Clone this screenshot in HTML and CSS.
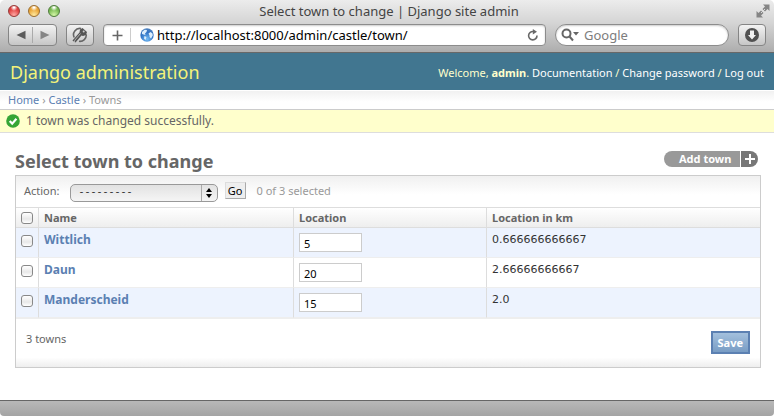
FILE: index.html
```html
<!DOCTYPE html>
<html lang="en">
<head>
<meta charset="utf-8">
<title>Select town to change | Django site admin</title>
<link rel="stylesheet" href="styles.css">
</head>
<body>
<div class="window">
  <div class="chrome">
    <div class="titlebar">
      <div class="lights">
        <button type="button" class="light light-red" aria-label="Close"></button>
        <button type="button" class="light light-amber" aria-label="Minimize"></button>
        <button type="button" class="light light-green" aria-label="Zoom"></button>
      </div>
      <div class="window-title">Select town to change | Django site admin</div>
      <button type="button" class="fullscreen" aria-label="Full screen">
        <svg width="14" height="14" viewBox="0 0 14 14"><path d="M7 .5h6.500V7l-2-2-2.500 2.500L6.500 5 9 2.500zM.5 7l2 2L5 6.500 7.500 9 5 11.500l2 2H.5z" fill="#858585"/><path d="M5 5l4 4" stroke="#dcdcdc" stroke-width="1" transform="rotate(90 7 7)"/></svg>
      </button>
    </div>
    <div class="toolbar">
      <div class="nav">
        <button type="button" aria-label="Back"><svg width="10" height="10" viewBox="0 0 10 10"><path d="M9.500 .8v8.400L.5 5z" fill="#5b5b5b"/></svg></button>
        <button type="button" aria-label="Forward"><svg width="10" height="10" viewBox="0 0 10 10"><path d="M.5 .8v8.400L9.500 5z" fill="#858585"/></svg></button>
      </div>
      <button type="button" class="tool" aria-label="Password manager">
        <svg width="18" height="18" viewBox="0 0 18 18"><path d="M3.200 11.500A6.300 6.300 0 0 1 10 2.500M8 15.300a6.300 6.300 0 0 0 7.200-7" fill="none" stroke="#666" stroke-width="1.600"/><path d="M1.500 14.500L8.500 6.500l.5-3 2.500-1.500 4.500 4-1 3-3 1-1.500-.5L4.500 16.500l-1-.5 1-2-2 1.500z" fill="#555"/><path d="M3.500 14.500l6-7" stroke="#c8c8c8" stroke-width=".8"/><circle cx="12.700" cy="5.500" r="1" fill="#ccc"/></svg>
      </button>
      <div class="address">
        <button type="button" class="plus" aria-label="Add bookmark"><svg width="11" height="11" viewBox="0 0 11 11"><path d="M5.500 0.500v10M0.500 5.500h10" stroke="#666" stroke-width="1.600"/></svg></button>
        <svg class="globe" width="14" height="14" viewBox="0 0 14 14"><defs><radialGradient id="sea" cx=".5" cy=".8" r=".8"><stop offset="0" stop-color="#76bdf5"/><stop offset=".6" stop-color="#2f72c4"/><stop offset="1" stop-color="#4d80bc"/></radialGradient></defs><circle cx="7" cy="7" r="6.700" fill="url(#sea)"/><path d="M2 4L4.500 1.800l2.500.2-.5 2L5 5.500l.5 1.500-2-.5L2 6zM8.500 5.500l2-1.500 2 1.500.3 2-1.800 3-1.500-1.500v-1.500zM4.500 8l2 1-1 3-1.500-1.500z" fill="#dceefc"/></svg>
        <input type="text" aria-label="Address" value="http://localhost:8000/admin/castle/town/">
        <button type="button" aria-label="Reload"><svg width="12" height="12" viewBox="0 0 12 12"><path d="M10 6.500A4.200 4.200 0 1 1 6.500 2.500" fill="none" stroke="#686868" stroke-width="1.600"/><path d="M5.800 0l4.200 2.700-4.200 2.800z" fill="#686868"/></svg></button>
      </div>
      <div class="search">
        <svg width="18" height="14" viewBox="0 0 18 14"><circle cx="5.500" cy="5.500" r="4" fill="none" stroke="#666" stroke-width="2"/><path d="M8.500 8.500l3.500 4" stroke="#666" stroke-width="2"/><path d="M12 4h6l-3 3.500z" fill="#666"/></svg>
        <input type="text" aria-label="Search" placeholder="Google">
      </div>
      <button type="button" class="tool" aria-label="Downloads"><svg width="16" height="16" viewBox="0 0 16 16"><circle cx="8" cy="8" r="7" fill="#505050"/><path d="M6 3.500h4V8h2l-4 4.500L4 8h2z" fill="#f2f2f2"/></svg></button>
    </div>
  </div>

  <header class="site-header">
    <div class="branding">Django administration</div>
    <div class="user-tools">Welcome, <strong>admin</strong>. <a href="#">Documentation</a> / <a href="#">Change password</a> / <a href="#">Log out</a></div>
  </header>
  <nav class="breadcrumbs"><a href="#">Home</a> › <a href="#">Castle</a> › Towns</nav>
  <div class="message">
    <svg width="14" height="14" viewBox="0 0 14 14"><circle cx="7" cy="7" r="6.800" fill="#36a536"/><path d="M3.700 7l2.500 2.600 4.200-4.800" fill="none" stroke="#fff" stroke-width="2.200"/></svg>
    <span>1 town was changed successfully.</span>
  </div>

  <main>
    <div class="heading">
      <h1>Select town to change</h1>
      <a class="add" href="#"><span class="add-text">Add town</span><span class="add-icon"><svg width="10" height="10" viewBox="0 0 10 10"><path d="M5 0v10M0 5h10" stroke="#fff" stroke-width="2"/></svg></span></a>
    </div>
    <form class="changelist">
      <div class="actions">
        <label for="action">Action:</label>
        <div class="select">
          <select id="action"><option>---------</option></select>
          <svg class="arrows" width="6" height="10" viewBox="0 0 6 10"><path d="M0 4l3-4 3 4zM0 6l3 4 3-4z" fill="#000"/></svg>
        </div>
        <button type="button" class="go">Go</button>
        <span class="count">0 of 3 selected</span>
      </div>
      <table>
        <colgroup><col class="col-check"><col class="col-name"><col class="col-location"><col></colgroup>
        <thead>
          <tr><th class="check"><input type="checkbox" aria-label="Select all"></th><th>Name</th><th>Location</th><th>Location in km</th></tr>
        </thead>
        <tbody>
          <tr><td class="check"><input type="checkbox" aria-label="Select Wittlich"></td><th><a href="#">Wittlich</a></th><td class="field"><input type="text" aria-label="Wittlich location" value="5"></td><td>0.666666666667</td></tr>
          <tr><td class="check"><input type="checkbox" aria-label="Select Daun"></td><th><a href="#">Daun</a></th><td class="field"><input type="text" aria-label="Daun location" value="20"></td><td>2.66666666667</td></tr>
          <tr><td class="check"><input type="checkbox" aria-label="Select Manderscheid"></td><th><a href="#">Manderscheid</a></th><td class="field"><input type="text" aria-label="Manderscheid location" value="15"></td><td>2.0</td></tr>
        </tbody>
      </table>
      <div class="paginator"><span>3 towns</span><button type="button" class="save">Save</button></div>
    </form>
  </main>
  <div class="statusbar"></div>
</div>
</body>
</html>
```
FILE: styles.css
```css
* { box-sizing: border-box; }
body {
  margin: 0;
  background: #fff;
  color: #333;
  font: 12px/16px "Noto Sans", "Open Sans", sans-serif;
}
button, input, select { margin: 0; font: inherit; }
a { color: #5b80b2; text-decoration: none; }
svg { display: block; flex: none; }

.window { display: flex; flex-direction: column; min-height: 100vh; }

.chrome {
  height: 53px;
  background: linear-gradient(#ececec, #d4d4d4 45%, #adadad);
  border-bottom: 1px solid #686868;
  border-radius: 5px 5px 0 0;
}
.chrome button { display: flex; align-items: center; justify-content: center; padding: 0; border: 0; background: none; }
.titlebar {
  display: grid;
  grid-template-columns: 1fr auto 1fr;
  align-items: center;
  height: 24px;
  padding: 0 4px 2px 8px;
}
.lights { display: flex; gap: 8px; }
.chrome .light { width: 12px; height: 12px; border: 1px solid #777; border-radius: 50%; }
.chrome .light-red { background: radial-gradient(circle at 50% 15%, #fff 5%, transparent 35%), radial-gradient(circle at 50% 90%, #ffaaa5, #e0403f 60%); border-color: #963a38; }
.chrome .light-amber { background: radial-gradient(circle at 50% 15%, #fff 5%, transparent 35%), radial-gradient(circle at 50% 90%, #ffeaa0, #eaa435 60%); border-color: #9a6d30; }
.chrome .light-green { background: radial-gradient(circle at 50% 15%, #fff 5%, transparent 35%), radial-gradient(circle at 50% 90%, #d5f7a8, #77b950 60%); border-color: #4e7b3c; }
.window-title { color: #444; font-size: 13px; }
.fullscreen { justify-self: end; }

.toolbar { display: flex; gap: 9px; height: 22px; padding: 0 8px; }
.nav, .chrome .tool {
  border: 1px solid #858585;
  border-radius: 4px;
  background: linear-gradient(#f3f3f3, #c6c6c6);
}
.nav { display: flex; width: 49px; padding: 2px 0; }
.nav button { flex: 1; }
.nav button + button { border-left: 1px solid #aaa; }
.chrome .tool { width: 28px; }
.address, .search {
  display: flex;
  align-items: center;
  border: 1px solid #8c8c8c;
  background: #fff;
  box-shadow: inset 0 1px 2px #ccc;
}
.address { flex: 1; padding: 0 6px 0 0; border-radius: 4px; }
.chrome .plus { width: 27px; height: 14px; border-right: 1px solid #ccc; }
.globe { margin-left: 9px; }
.address input, .search input { flex: 1; min-width: 0; padding: 0 3px; border: 0; outline: 0; background: none; font-size: 13px; color: #000; }
.search { width: 174px; padding-left: 5px; border-radius: 11px; }
.search input { padding-left: 5px; }
.search input::placeholder { color: #7d7d7d; }

.site-header {
  display: flex;
  align-items: center;
  justify-content: space-between;
  height: 37px;
  padding: 0 10px;
  background: #417690;
  color: #ffc;
}
.branding { color: #f4f379; font-size: 18px; line-height: 24px; }
.user-tools { padding-top: 3px; font-size: 11px; }
.user-tools a { color: #fff; }

.breadcrumbs {
  height: 20px;
  padding: 1px 8px;
  border-top: 1px solid #fff;
  border-bottom: 1px solid #ccc;
  background: linear-gradient(#f1f1f1, #fff 60%);
  color: #999;
  font-size: 11px;
}
.message {
  display: flex;
  align-items: center;
  gap: 6px;
  height: 23px;
  padding: 0 6px;
  border-bottom: 1px solid #ddd;
  background: #ffc;
  color: #666;
}

main { flex: 1; padding: 18px 13px 32px 15px; }
.heading { display: flex; justify-content: space-between; height: 24px; }
h1 { margin: 0; color: #666; font-size: 18px; line-height: 20px; }
.add { display: flex; width: 94px; height: 16px; gap: 1px; margin-right: 3px; color: #fff; font-size: 11px; font-weight: bold; }
.add-text { flex: 1; padding-left: 15px; border-radius: 8px 0 0 8px; background: #999; }
.add-icon { display: flex; align-items: center; justify-content: center; width: 17px; border-radius: 0 8px 8px 0; background: #777; }

.changelist { border: 1px solid #ccc; }
.actions {
  display: flex;
  align-items: center;
  height: 32px;
  padding: 0 8px 2px;
  border-bottom: 1px solid #ddd;
  background: linear-gradient(#f0f0f0, #fff 60%);
  color: #666;
  font-size: 11px;
}
.select { position: relative; width: 148px; height: 18px; margin: 4px 7px 0 10px; }
.select select {
  appearance: none;
  display: block;
  width: 100%;
  height: 100%;
  padding: 0 8px;
  border: 1px solid #999;
  border-radius: 5px;
  background: linear-gradient(90deg, transparent 130px, #aaa 130px, #aaa 131px, transparent 131px), linear-gradient(#e2e2e2, #f5f5f5);
  color: #333;
  font: 10px/16px "Liberation Mono", monospace;
}
.arrows { position: absolute; top: 4px; right: 6px; pointer-events: none; }
.go { width: 21px; height: 17px; padding: 0; border: 1px solid; border-color: #ddd #aaa #aaa #ddd; background: #eee; color: #000; line-height: 14px; }
.count { margin-left: 11px; color: #999; }

table { width: 100%; table-layout: fixed; border-collapse: separate; border-spacing: 0; font-size: 11px; }
.col-check { width: 23px; }
.col-name { width: 255px; }
.col-location { width: 193px; }
th, td { padding: 4px 5px; border-right: 1px solid #ddd; border-bottom: 1px solid #eee; text-align: left; vertical-align: top; }
th:last-child, td:last-child { border-right: 0; }
thead th { height: 20px; padding-top: 2px; padding-bottom: 1px; border-bottom-color: #ddd; background: linear-gradient(#fff, #eee); color: #666; }
tbody td, tbody th { height: 30px; }
tbody td { font-family: "DejaVu Sans", sans-serif; }
tbody th { font-size: 12px; }
tbody tr:nth-child(odd) { background: #edf3fe; }
.check { padding-right: 0; }
[type="checkbox"] { appearance: none; display: block; width: 12px; height: 12px; margin-top: 3px; border: 1px solid #888; border-radius: 3px; background: linear-gradient(#fff, #e8e8e8 60%, #fff); }
thead [type="checkbox"] { margin-top: 2px; }
[type="checkbox"]:checked { background: #5b80b2; }
.field input { display: block; width: 63px; height: 19px; margin-top: 1px; padding: 2px 4px 0; border: 1px solid #ccc; background: #fff; color: #000; font-family: "Noto Sans", sans-serif; }

.paginator {
  display: flex;
  align-items: flex-start;
  justify-content: space-between;
  height: 49px;
  padding: 12px 10px 0;
  border-top: 1px solid #eee;
  background: linear-gradient(#fff 80%, #eee);
  color: #666;
  font-size: 11px;
}
.save { height: 23px; padding: 0 5px; border: 2px solid #5b80b2; background: linear-gradient(#a3c0dd, #789cc4); color: #fff; font-weight: bold; }

.statusbar { height: 16px; border-top: 1px solid #666; border-radius: 0 0 4px 4px; background: linear-gradient(#b8b8b8, #a4a4a4); }
```
